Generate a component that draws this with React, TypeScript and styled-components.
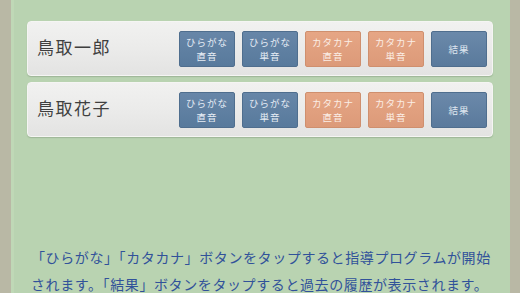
import React from 'react'
import styled, { createGlobalStyle, css } from 'styled-components'

const GlobalStyle = createGlobalStyle`
  html, body {
    margin: 0;
    padding: 0;
    background: #b9d3b1;
  }
  body {
    font-family: "Noto Sans CJK JP", "Noto Sans", sans-serif;
  }
`

type Kind = 'hira' | 'kata' | 'result'

type Student = { name: string }

const students: Student[] = [{ name: '鳥取一郎' }, { name: '鳥取花子' }]

const buttons: { kind: Kind; top: string; bottom?: string }[] = [
  { kind: 'hira', top: 'ひらがな', bottom: '直音' },
  { kind: 'hira', top: 'ひらがな', bottom: '単音' },
  { kind: 'kata', top: 'カタカナ', bottom: '直音' },
  { kind: 'kata', top: 'カタカナ', bottom: '単音' },
  { kind: 'result', top: '結果' },
]

export default function App() {
  return (
    <>
      <GlobalStyle />
      <Screen>
        <SideStrip />
        <Main>
          <CardList>
            {students.map((s) => (
              <Card key={s.name}>
                <Name>{s.name}</Name>
                <ButtonRow>
                  {buttons.map((b, i) => (
                    <ActionButton key={i} kind={b.kind} type="button">
                      <Label>{b.top}</Label>
                      {b.bottom && <Label>{b.bottom}</Label>}
                    </ActionButton>
                  ))}
                </ButtonRow>
              </Card>
            ))}
          </CardList>
          <Help>
            「ひらがな」「カタカナ」ボタンをタップすると指導プログラムが開始
            <br />
            されます。「結果」ボタンをタップすると過去の履歴が表示されます。
          </Help>
        </Main>
        <SideStrip narrow />
      </Screen>
    </>
  )
}

const Screen = styled.div`
  display: flex;
  width: 520px;
  height: 293px;
  overflow: hidden;
`
const SideStrip = styled.div<{ narrow?: boolean }>`
  flex: 0 0 ${({ narrow }) => (narrow ? '10px' : '11px')};
  background: #b9b8a5;
`
const Main = styled.div`
  flex: 1;
  display: flex;
  flex-direction: column;
  background: #b9d3b1;
  border-left: 3px solid #bfd8b6;
  padding: 21px 17px 0 13px;
`
const CardList = styled.div`
  display: flex;
  flex-direction: column;
  gap: 6px;
`
const Card = styled.div`
  display: flex;
  align-items: center;
  justify-content: space-between;
  height: 55px;
  box-sizing: border-box;
  padding: 0 5px 0 9px;
  border: 1px solid #f5f5f3;
  border-radius: 4px;
  background: linear-gradient(#f1f1f0, #ebebea 50%, #e3e3e2);
  box-shadow: 0 1px 1px rgba(120, 140, 115, 0.4);
`
const Name = styled.div`
  padding-bottom: 5px;
  font-size: 17px;
  letter-spacing: 1.5px;
  color: #3f3f3f;
  font-weight: 400;
`
const ButtonRow = styled.div`
  display: flex;
  gap: 7px;
`
const palettes = {
  hira: css`
    background: linear-gradient(#6786a8, #587a9c);
    border-color: #4f6e8e;
    color: #e6edf5;
  `,
  kata: css`
    background: linear-gradient(#e6a685, #dc9a79);
    border-color: #cf8f6e;
    color: #fbeee6;
  `,
  result: css`
    background: linear-gradient(#6b89aa, #5a7a9c);
    border-color: #4f6e8e;
    color: #dfe7f0;
  `,
}
const ActionButton = styled.button<{ kind: Kind }>`
  display: flex;
  flex-direction: column;
  align-items: center;
  justify-content: center;
  width: 56px;
  height: 36px;
  margin: 0;
  padding: 0;
  border: 1px solid;
  border-radius: 2px;
  font-family: "Noto Sans CJK JP", sans-serif;
  font-size: 9.5px;
  letter-spacing: 1px;
  ${({ kind }) => palettes[kind]}
`
const Label = styled.span`
  display: block;
  line-height: 14px;
`
const Help = styled.p`
  margin: 107px 0 0 4px;
  font-size: 14px;
  line-height: 27px;
  letter-spacing: 0.6px;
  color: #31529a;
  white-space: nowrap;
`
